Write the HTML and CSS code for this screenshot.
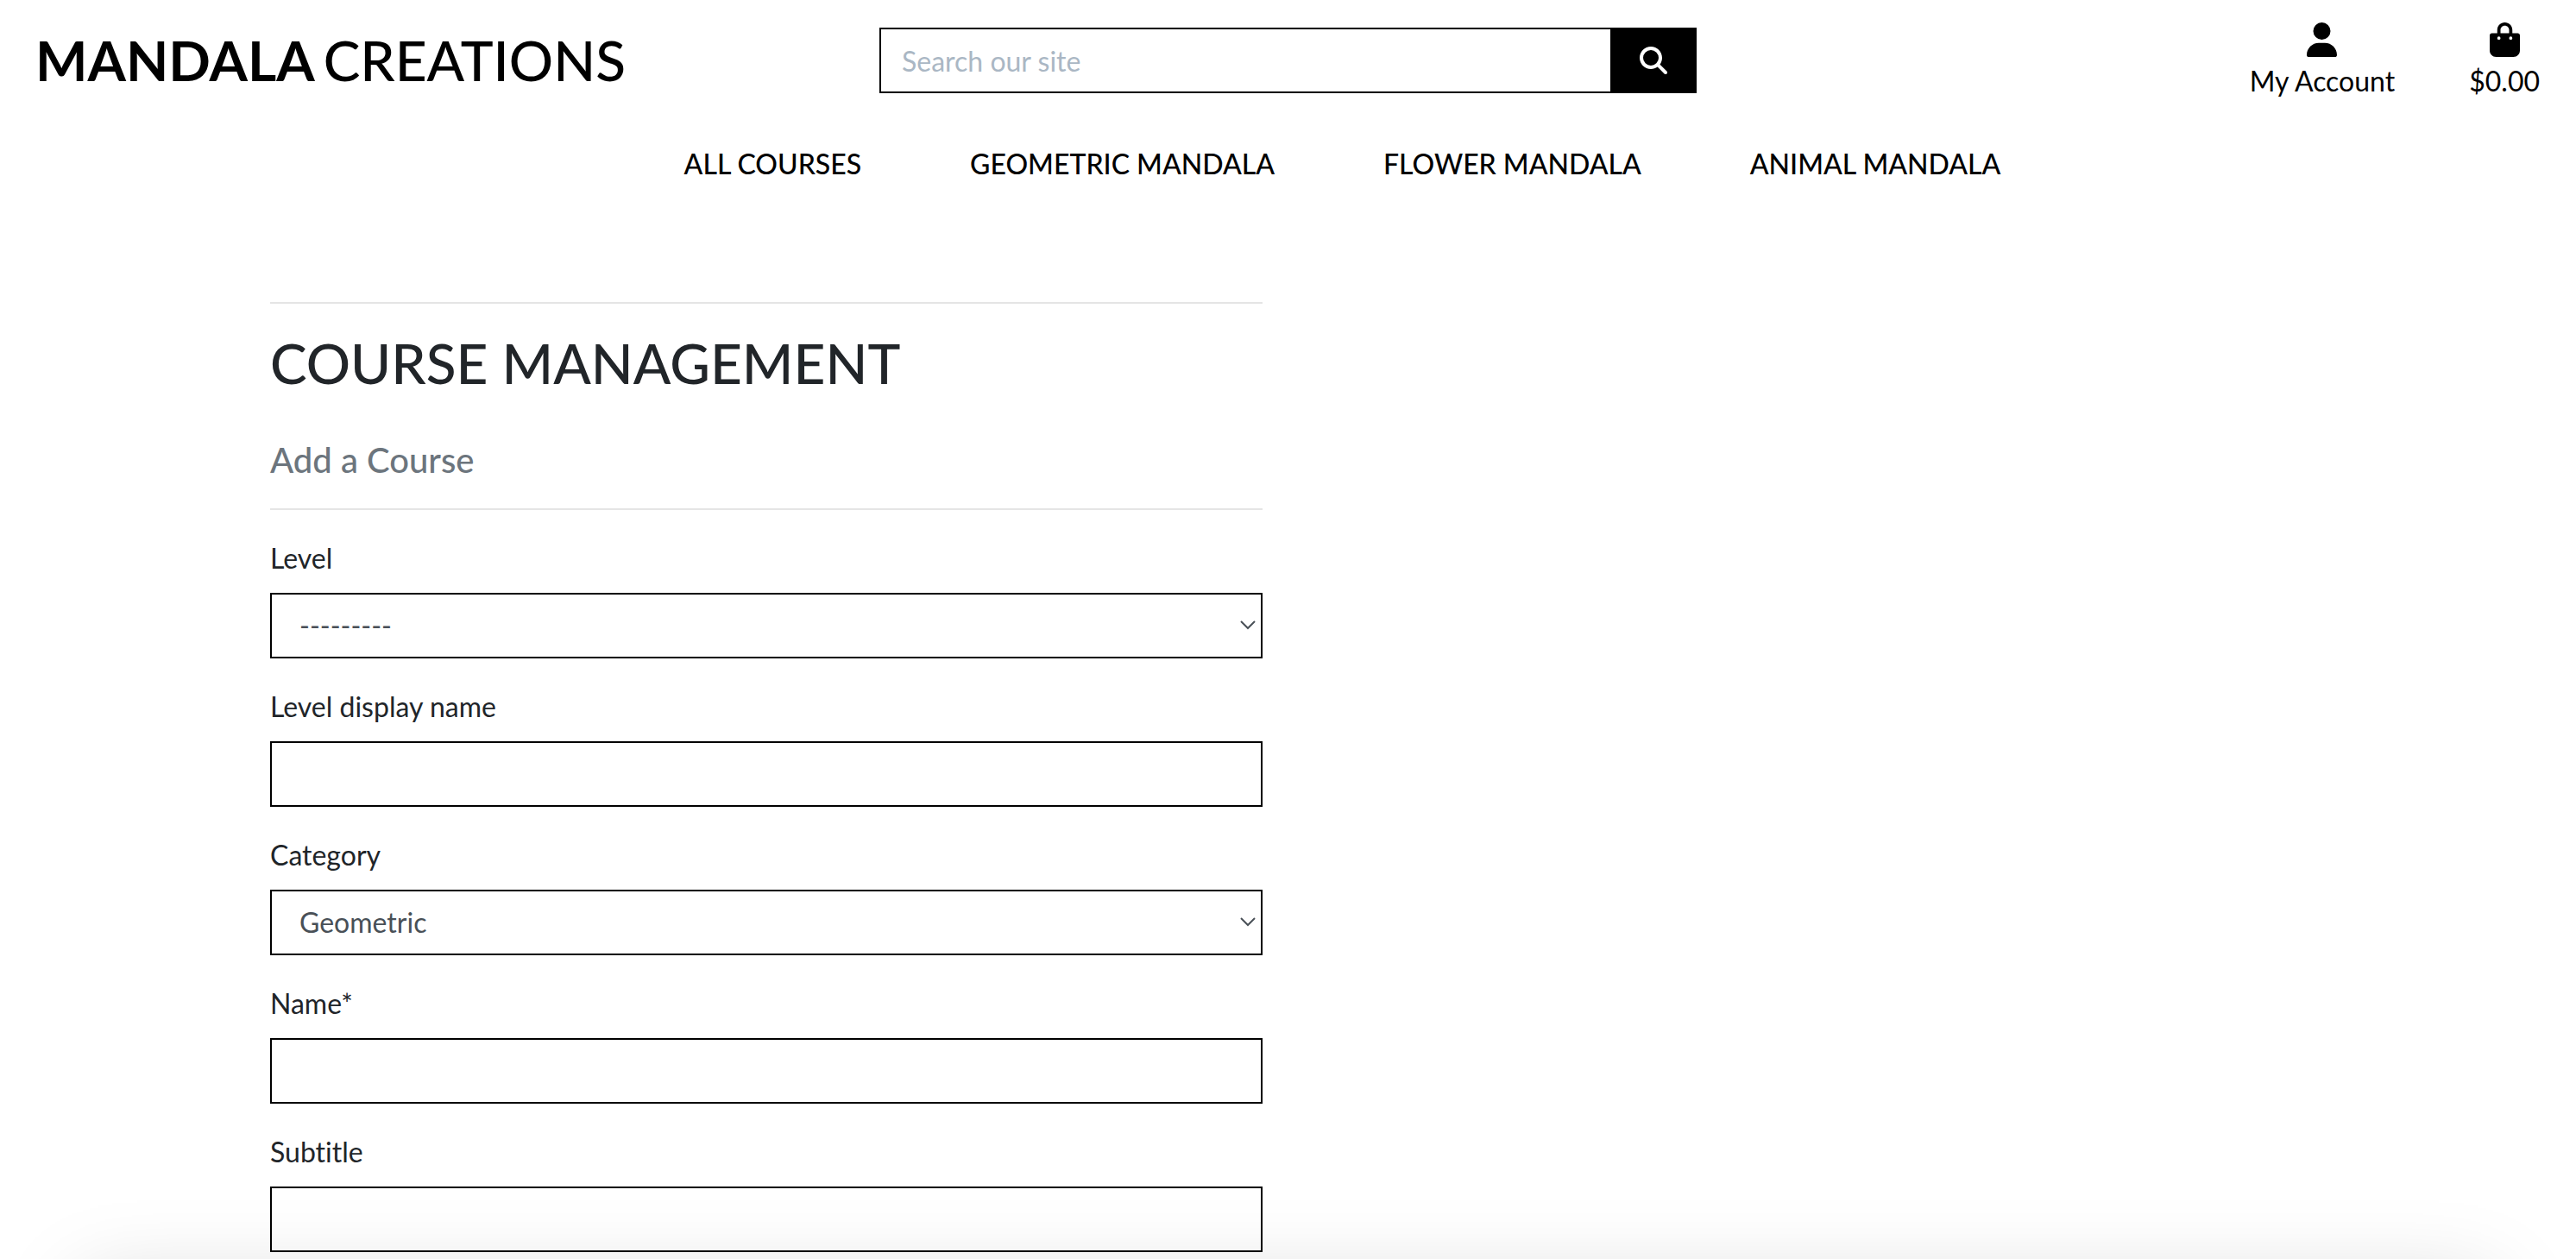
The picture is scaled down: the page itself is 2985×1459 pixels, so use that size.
FILE: index.html
```html
<!DOCTYPE html>
<html lang="en">
<head>
  <meta charset="utf-8">
  <meta name="viewport" content="width=device-width, initial-scale=1">
  <title>Mandala Creations</title>
  <link rel="stylesheet" href="styles.css">
</head>
<body>
  <header class="site-header">
    <div class="topbar">
      <a class="logo" href="#"><strong>MANDALA</strong> <span>CREATIONS</span></a>
      <form class="search" role="search">
        <input class="search-input" type="text" placeholder="Search our site" aria-label="Search our site">
        <button class="search-button" type="submit" aria-label="Search">
          <svg viewBox="0 0 512 512" width="32" height="32" fill="currentColor" aria-hidden="true"><path d="M416 208c0 45.900-14.900 88.300-40 122.700L502.600 457.400c12.500 12.500 12.500 32.800 0 45.300s-32.800 12.500-45.300 0L330.700 376c-34.400 25.200-76.800 40-122.700 40C93.100 416 0 322.900 0 208S93.100 0 208 0S416 93.100 416 208zM208 352a144 144 0 1 0 0-288 144 144 0 1 0 0 288z"/></svg>
        </button>
      </form>
      <div class="account">
        <a class="account-link" href="#">
          <svg viewBox="0 0 448 512" width="35" height="40" fill="currentColor" aria-hidden="true"><path d="M224 256A128 128 0 1 0 224 0a128 128 0 1 0 0 256zM178.300 304C79.800 304 0 383.800 0 482.300C0 498.700 13.300 512 29.700 512H418.300c16.400 0 29.700-13.300 29.700-29.700C448 383.800 368.200 304 269.700 304H178.300z"/></svg>
          <span>My Account</span>
        </a>
        <a class="account-link" href="#">
          <svg viewBox="0 0 448 512" width="35" height="40" fill="currentColor" aria-hidden="true"><path d="M112 112C112 50.100 162.100 0 224 0s112 50.100 112 112v48h80c17.700 0 32 14.300 32 32V416c0 53-43 96-96 96H96c-53 0-96-43-96-96V192c0-17.700 14.300-32 32-32h80V112zm48 48H288V112c0-35.300-28.700-64-64-64s-64 28.700-64 64v48zm-24 96a24 24 0 1 0 0-48 24 24 0 1 0 0 48zm200-24a24 24 0 1 0-48 0 24 24 0 1 0 48 0z"/></svg>
          <span>$0.00</span>
        </a>
      </div>
    </div>
    <nav class="main-nav">
      <a href="#">ALL COURSES</a>
      <a href="#">GEOMETRIC MANDALA</a>
      <a href="#">FLOWER MANDALA</a>
      <a href="#">ANIMAL MANDALA</a>
    </nav>
  </header>

  <main class="page">
    <section class="course">
      <hr>
      <h2>COURSE MANAGEMENT</h2>
      <h5>Add a Course</h5>
      <hr>
      <form class="course-form">
        <div class="field">
          <label for="level">Level</label>
          <select id="level"><option>---------</option></select>
        </div>
        <div class="field">
          <label for="display-name">Level display name</label>
          <input id="display-name" type="text">
        </div>
        <div class="field">
          <label for="category">Category</label>
          <select id="category"><option>Geometric</option></select>
        </div>
        <div class="field">
          <label for="name">Name*</label>
          <input id="name" type="text" required>
        </div>
        <div class="field">
          <label for="subtitle">Subtitle</label>
          <input id="subtitle" type="text">
        </div>
      </form>
    </section>
  </main>
  <div class="bottom-shadow" aria-hidden="true"></div>
</body>
</html>
```
FILE: styles.css
```css
*,
*::before,
*::after {
  box-sizing: border-box;
}

body {
  margin: 0;
  background: #fff;
  color: #212529;
  font-family: Lato, "Open Sans", sans-serif;
  font-size: 32px;
  font-variant-ligatures: none;
  line-height: 48px;
}

input,
select,
button {
  margin: 0;
  border: 2px solid #000;
  border-radius: 0;
  background: #fff;
  color: #495057;
  font: inherit;
}

a {
  color: #000;
  text-decoration: none;
}

/* Header */

.topbar {
  display: grid;
  grid-template-columns: repeat(3, minmax(0, 1fr));
  align-items: start;
}

.logo {
  display: flex;
  gap: 10px;
  padding: 30px 0 0 41px;
  font-size: 64px;
  font-weight: 500;
  line-height: 80px;
  white-space: nowrap;
}

.logo strong {
  font-weight: 700;
}

.search {
  display: flex;
  padding: 32px 24px 0;
}

.search-input {
  flex: 1;
  min-width: 0;
  height: 76px;
  padding: 0 24px;
  border-right: 0;
}

.search-input::placeholder {
  color: #aab7c4;
  opacity: 1;
}

.search-button {
  display: flex;
  align-items: center;
  justify-content: center;
  width: 100px;
  background: #000;
  color: #fff;
}

.account {
  display: flex;
  justify-content: flex-end;
  gap: 86px;
  padding: 26px 42px 0 0;
}

.account-link {
  display: flex;
  flex-direction: column;
  align-items: center;
  gap: 4px;
}

.main-nav {
  display: flex;
  justify-content: center;
  gap: 126px;
  padding: 48px 0 0 126px;
  font-weight: 500;
}

/* Course form */

.page {
  display: grid;
  grid-template-columns: repeat(2, minmax(0, 1fr));
  gap: 60px;
  padding: 136px 312px 0 313px;
}

hr {
  height: 2px;
  margin: 0;
  border: 0;
  background: #e5e5e5;
}

h2,
h5 {
  margin: 0;
  font-weight: 500;
}

h2 {
  padding: 30px 0 50px;
  font-size: 64px;
  line-height: 77px;
}

h5 {
  padding-bottom: 32px;
  color: #6c757d;
  font-size: 40px;
}

.course-form {
  display: flex;
  flex-direction: column;
  gap: 32px;
  padding-top: 32px;
}

.field {
  display: flex;
  flex-direction: column;
  gap: 16px;
}

.field input,
.field select {
  width: 100%;
  height: 76px;
  padding: 0 32px;
}

.field select {
  appearance: none;
  background: #fff url("data:image/svg+xml,%3Csvg xmlns='http://www.w3.org/2000/svg' width='20' height='12' fill='none' stroke='%23495057' stroke-width='2'%3E%3Cpath d='M2 1l8 8 8-8'/%3E%3C/svg%3E") no-repeat right 5px center;
}

/* Soft shade along the lower edge of the window */
.bottom-shadow {
  position: fixed;
  top: calc(100% + 32px);
  right: 96px;
  left: 96px;
  height: 400px;
  box-shadow: 0 0 96px rgba(0, 0, 0, 0.175);
  pointer-events: none;
}
```
